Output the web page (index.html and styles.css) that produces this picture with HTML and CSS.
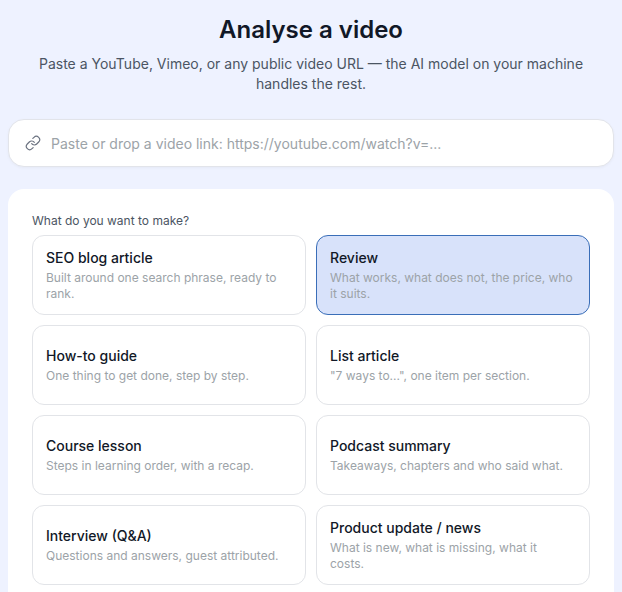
FILE: index.html
```html
<!DOCTYPE html>
<html lang="en">
<head>
    <meta charset="UTF-8">
    <meta name="viewport" content="width=device-width, initial-scale=1.0">
    <title>Analyse a video</title>
    <link rel="stylesheet" href="styles.css">
</head>
<body>

<div class="page">
    <div class="header">
        <h1>Analyse a video</h1>
        <p>Paste a YouTube, Vimeo, or any public video URL — the AI model on your machine handles the rest.</p>
    </div>

    <div class="url-box">
        <svg class="link-icon" viewBox="0 0 24 24" width="16" height="16" fill="none" stroke="currentColor" stroke-width="1.75" stroke-linecap="round" stroke-linejoin="round">
            <path d="M10 13a5 5 0 0 0 7.54.54l3-3a5 5 0 0 0-7.07-7.07l-1.72 1.71"></path>
            <path d="M14 11a5 5 0 0 0-7.54-.54l-3 3a5 5 0 0 0 7.07 7.07l1.71-1.71"></path>
        </svg>
        <input type="text" placeholder="Paste or drop a video link: https://youtube.com/watch?v=...">
    </div>

    <div class="panel">
        <div class="label">What do you want to make?</div>
        <div class="options">
            <div class="option">
                <div class="option-title">SEO blog article</div>
                <div class="option-desc">Built around one search phrase, ready to rank.</div>
            </div>
            <div class="option selected">
                <div class="option-title">Review</div>
                <div class="option-desc">What works, what does not, the price, who it suits.</div>
            </div>
            <div class="option">
                <div class="option-title">How-to guide</div>
                <div class="option-desc">One thing to get done, step by step.</div>
            </div>
            <div class="option">
                <div class="option-title">List article</div>
                <div class="option-desc">"7 ways to...", one item per section.</div>
            </div>
            <div class="option">
                <div class="option-title">Course lesson</div>
                <div class="option-desc">Steps in learning order, with a recap.</div>
            </div>
            <div class="option">
                <div class="option-title">Podcast summary</div>
                <div class="option-desc">Takeaways, chapters and who said what.</div>
            </div>
            <div class="option">
                <div class="option-title">Interview (Q&amp;A)</div>
                <div class="option-desc">Questions and answers, guest attributed.</div>
            </div>
            <div class="option">
                <div class="option-title">Product update / news</div>
                <div class="option-desc">What is new, what is missing, what it costs.</div>
            </div>
        </div>
    </div>
</div>

</body>
</html>
```

FILE: styles.css
```css
html, body {
    height: 100%;
    overflow: hidden;
}

body {
    font-family: Inter, "Liberation Sans", sans-serif;
    background-color: #eef2ff;
    color: #111827;
    margin: 0;
}

.page {
    padding: 16px 8px 0;
}

.header {
    text-align: center;
    margin-bottom: 25px;
}

.header h1 {
    font-size: 24px;
    line-height: 28px;
    font-weight: 600;
    margin: 0 0 10px;
}

.header p {
    font-size: 14px;
    line-height: 20px;
    color: #4b5563;
    margin: 0 auto;
    max-width: 560px;
}

.url-box {
    display: flex;
    align-items: center;
    gap: 10px;
    height: 48px;
    box-sizing: border-box;
    padding: 0 16px;
    background-color: #fff;
    border: 1px solid #e2e4ea;
    border-radius: 16px;
    box-shadow: 0 1px 3px rgba(0, 0, 0, 0.04);
    margin-bottom: 22px;
}

.link-icon {
    color: #6b7280;
    flex-shrink: 0;
}

.url-box input {
    flex: 1;
    border: none;
    outline: none;
    padding: 0;
    background: transparent;
    font-family: inherit;
    font-size: 14px;
    color: #111827;
}

.url-box input::placeholder {
    color: #9ca3a8;
}

.panel {
    background-color: #fff;
    border-radius: 16px;
    padding: 24px;
}

.label {
    font-size: 12px;
    line-height: 16px;
    color: #4b5563;
    margin-bottom: 6px;
}

.options {
    display: grid;
    grid-template-columns: 1fr 1fr;
    grid-auto-rows: 80px;
    gap: 10px;
}

.option {
    display: flex;
    flex-direction: column;
    justify-content: center;
    gap: 2px;
    box-sizing: border-box;
    padding: 0 15px 0 13px;
    border: 1px solid #e2e4e8;
    border-radius: 12px;
    background-color: #fff;
}

.option.selected {
    background-color: #d8e2fa;
    border-color: #3a6eb8;
}

.option-title {
    font-size: 14px;
    line-height: 20px;
    font-weight: 500;
    color: #111827;
}

.option-desc {
    font-size: 12px;
    line-height: 16px;
    color: #9ca3a8;
}
```
